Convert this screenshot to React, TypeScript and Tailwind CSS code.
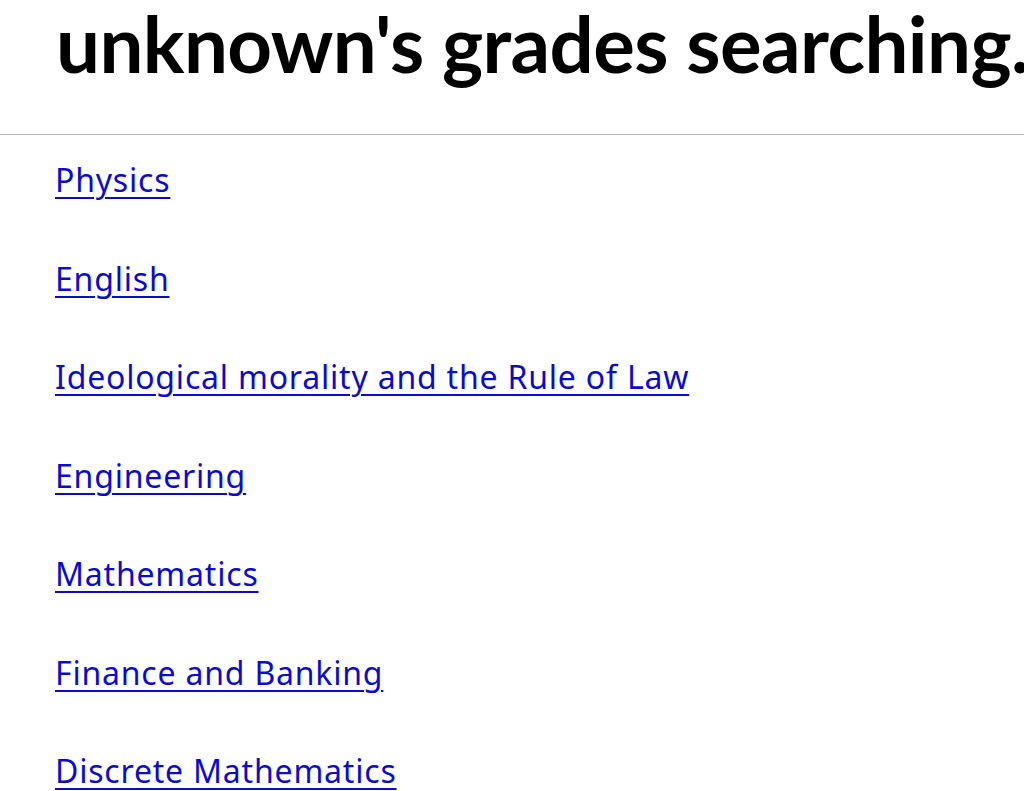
const subjects = [
  "Physics",
  "English",
  "Ideological morality and the Rule of Law",
  "Engineering",
  "Mathematics",
  "Finance and Banking",
  "Discrete Mathematics",
];

export default function App() {
  return (
    <div className="h-[791px] w-[1024px] overflow-hidden bg-white">
      <header className="h-[135px] border-b border-[#b8b8b8] pl-[56px] pt-[4px]">
        <h1 className="whitespace-nowrap font-['Lato',sans-serif] text-[78px] font-bold leading-[78px] tracking-[-0.6px] text-black">
          unknown's grades searching.
        </h1>
      </header>
      <ul className="flex flex-col gap-[50.5px] px-[55px] pt-[21px] font-['Noto_Sans',sans-serif]">
        {subjects.map((s) => (
          <li key={s} className="text-[32px] leading-[48px] tracking-[0.8px]">
            <a href="#" className="text-[#0b0bcc] underline decoration-[2px] underline-offset-[5px]">
              {s}
            </a>
          </li>
        ))}
      </ul>
    </div>
  );
}
